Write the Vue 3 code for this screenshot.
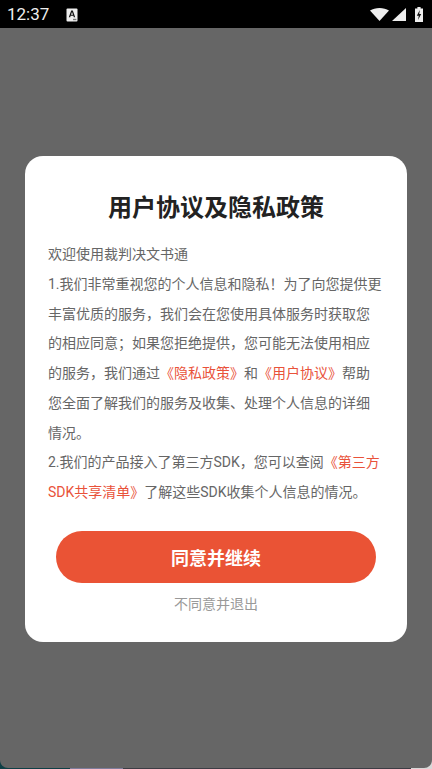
<script setup>
</script>

<template>
  <div class="screen">
    <div class="status">
      <span class="time">12:37</span>
      <svg class="a-icon" width="12" height="14" viewBox="0 0 12 14">
        <rect x="0.5" y="0.5" width="11" height="13" rx="1" fill="#eee" />
        <path d="M2.800 9.200 5.200 2.600h1.600l2.400 6.600H7.800l-.4-1.400H4.600l-.4 1.400zM5 6.700h2L6 3.900z" fill="#111" />
        <rect x="7" y="10.800" width="3.400" height="1.400" fill="#777" />
      </svg>
      <span class="spacer"></span>
      <svg class="wifi" width="19" height="13" viewBox="0 0 19 13">
        <path d="M0 2.600C2.600 .9 5.900 0 9.500 0s6.900 .9 9.500 2.600L9.500 13z" fill="#eee" />
      </svg>
      <svg class="signal" width="14" height="13" viewBox="0 0 14 13">
        <path d="M0 13 14 0v13z" fill="#eee" />
      </svg>
      <svg class="battery" width="8" height="15" viewBox="0 0 8 15">
        <path d="M2.400 0h3.200v1.500H8V15H0V1.500h2.400z" fill="#eee" />
        <path d="M4.800 3 1.800 8.800h2L3 13l3.200-6H4.200z" fill="#111" />
      </svg>
    </div>
    <main class="overlay">
      <section class="card">
        <h1 class="title">用户协议及隐私政策</h1>
        <div class="body">
          <p>欢迎使用裁判决文书通</p>
          <p>1.我们非常重视您的个人信息和隐私！为了向您提供更丰富优质的服务，我们会在您使用具体服务时获取您的相应同意；如果您拒绝提供，您可能无法使用相应的服务，我们通过<span class="link">《隐私政策》</span>和<span class="link">《用户协议》</span>帮助您全面了解我们的服务及收集、处理个人信息的详细情况。</p>
          <p>2.我们的产品接入了第三方SDK，您可以查阅<span class="link">《第三方SDK共享清单》</span>了解这些SDK收集个人信息的情况。</p>
        </div>
        <button class="agree">同意并继续</button>
        <button class="decline">不同意并退出</button>
      </section>
    </main>
  </div>
</template>

<style scoped>
.screen {
  width: 432px;
  height: 769px;
  display: flex;
  flex-direction: column;
  background: linear-gradient(to right, #0e3f46 0 70px, #7f7d9c 70px 123px, #3d3d45 123px 411px, #d8d8d8 411px);
  font-family: Roboto, "Noto Sans CJK SC", sans-serif;
  overflow: hidden;
}
.status {
  height: 28px;
  flex: none;
  background: #000;
  display: flex;
  align-items: center;
  padding: 0 9px 0 7px;
  color: #eee;
}
.time {
  font-size: 17px;
  width: 59px;
}
.a-icon { margin-top: 2px; }
.spacer { flex: 1; }
.wifi { margin: 1px 3px 0 0; }
.signal { margin: 1px 9px 0 0; }
.battery { margin-top: 0; }
.overlay {
  flex: 1;
  background: #666;
  padding-top: 128px;
  padding-left: 25px;
  border-radius: 0 0 8px 8px;
  margin-bottom: 1px;
}
.card {
  width: 382px;
  height: 486px;
  background: #fff;
  border-radius: 18px;
  padding: 35px 0 0 23px;
  box-sizing: border-box;
  display: flex;
  flex-direction: column;
}
.title {
  margin: 0;
  font-size: 24px;
  line-height: 34px;
  font-weight: 700;
  color: #222;
  width: 336px;
  text-align: center;
}
.body {
  width: 335px;
  margin-top: 15px;
  font-size: 14px;
  line-height: 29.75px;
  color: #666;
}
.body p { margin: 0; }
.link { color: #e9523a; }
.agree {
  margin: 23px 0 0 8px;
  width: 320px;
  height: 52px;
  flex: none;
  border: 0;
  border-radius: 26px;
  background: #ea5335;
  color: #fff;
  font: 700 18px Roboto, "Noto Sans CJK SC", sans-serif;
}
.decline {
  margin-top: 11px;
  border: 0;
  padding: 0;
  background: none;
  color: #999;
  width: 336px;
  text-align: center;
  font: 14px/20px Roboto, "Noto Sans CJK SC", sans-serif;
}
</style>
